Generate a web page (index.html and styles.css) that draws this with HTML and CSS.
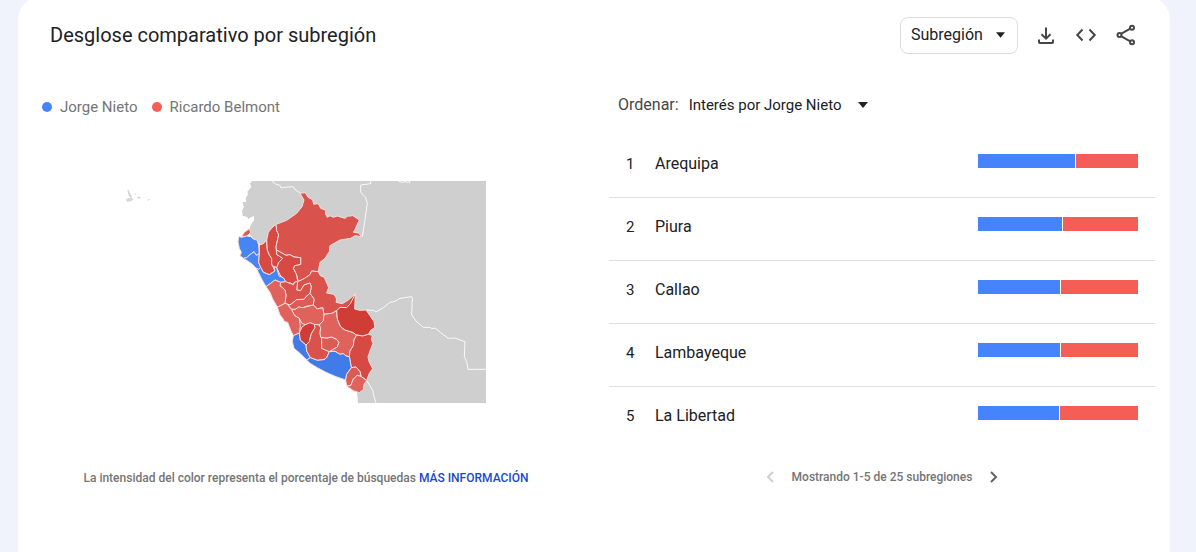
FILE: index.html
```html
<!DOCTYPE html>
<html lang="es">
<head>
<meta charset="utf-8">
<meta name="viewport" content="width=device-width, initial-scale=1">
<title>Desglose comparativo por subregión</title>
<link rel="stylesheet" href="styles.css">
</head>
<body>
<main class="card">
  <header class="card-header">
    <h1 class="title">Desglose comparativo por subregión</h1>
    <div class="actions">
      <div class="picker picker-boxed">
        <select class="select" aria-label="Resolución"><option>Subregión</option></select>
        <svg class="caret" viewBox="0 0 10 6" aria-hidden="true"><path d="M0 0h10L5 6z"/></svg>
      </div>
      <button class="icon-button" type="button" aria-label="Descargar CSV">
        <svg class="icon" viewBox="0 0 24 24"><path d="M12 4.500v11M7.500 11.200l4.500 4.500 4.500-4.500M5 16.500v2.700q0 .8.8.8h12.400q.8 0 .8-.8v-2.700"/></svg>
      </button>
      <button class="icon-button" type="button" aria-label="Insertar">
        <svg class="icon" viewBox="0 0 24 24"><path d="M8.500 6.500L3.300 12l5.200 5.500M15.500 6.500l5.200 5.500-5.200 5.500"/></svg>
      </button>
      <button class="icon-button" type="button" aria-label="Compartir">
        <svg class="icon" viewBox="0 0 24 24"><path d="M7 10.900l8.800-5M7 13.100l8.800 5"/><circle cx="5.500" cy="12" r="2"/><circle cx="18" cy="4.800" r="2"/><circle cx="18" cy="19.200" r="2"/></svg>
      </button>
    </div>
  </header>

  <div class="columns">
    <section class="map-panel">
      <ul class="legend">
        <li class="legend-item"><span class="dot blue"></span>Jorge Nieto</li>
        <li class="legend-item"><span class="dot red"></span>Ricardo Belmont</li>
      </ul>
      <svg class="map" viewBox="-330 18 1098 666" role="img" aria-label="Mapa de Perú por subregión">
        <g class="land">
          <path d="M68 18 60 25 64 36 52 50 54 58 47 70 49 80 37 82 42 95 36 107 38 122 52 126 54 132 72 122 72 136 62 150 58 162 60 180 100 215 300 500 380 640 384 684H768V18z"/>
          <path class="islands" d="M-308 45l5 1 4 11 5 8-3 4-7-7zM-312 74l7-5 10-1 6 5-8 6-12 1zM-288 56l7-1 1 3-5 1zM-280 67l8-2 5 3-6 4zM-248 75l7-4 1 3-6 3z"/>
        </g>
        <g class="border">
          <path d="M126 18 136 27 150 31 153 39 172 36 190 35 196 45 212 54"/>
          <path d="M422 16V26L392 30V52L406 66 412 85 404 140 397 185"/>
          <path d="M505 18q10 7 20 2l8 2 6-5v8"/>
          <path d="M408 405 432 406 438 411 460 398 480 382 492 380 510 370 545 365 547 370 545 420 558 438 580 457 600 457 606 461 615 459 632 473 655 490 675 489 705 500 703 545 710 560 714 583H768M410 618 420 632 428 646 431 662 438 684"/>
        </g>
        <path class="base" d="M100 240 150 200 210 200 230 280 260 330 300 400 350 440 380 520 370 600 300 560 240 530 180 430 130 340z"/>
        <g class="regions">
          <path class="r2" d="M35 184 43 172 58 161 62 172 50 184z"/>
          <path class="b1" d="M27 184 34 187 50 183 62 185 72 193 81 195 86 210 88 235 79 241 72 230 60 239 50 248 40 250 30 242 34 232 28 220 24 200z"/>
          <path class="b1" d="M50 248 60 239 72 230 79 241 88 236 86 262 92 277 86 283 79 280 65 266 50 256 40 250z"/>
          <path class="r4" d="M88 210 100 206 110 195 112 225 118 240 125 250 125 268 135 288 128 292 118 299 100 292 92 277 86 262 88 236z"/>
          <path class="r4" d="M110 195 115 172 126 158 138 148 140 166 146 180 138 215 140 238 158 250 146 263 140 278 132 275 125 268 125 250 118 240 112 225z"/>
          <path class="r3" d="M138 148 170 136 200 115 216 95 222 75 210 55 226 53 234 67 248 74 251 88 262 86 267 89 272 100 288 106 286 116 292 127 300 122 310 127 322 123 345 130 352 124 368 122 378 128 388 135 374 166 370 172 386 174 395 185 375 182 362 190 330 195 300 212 298 230 285 250 270 262 265 290 245 288 240 299 224 310 205 320 200 300 190 280 194 272 212 268 212 248 192 246 180 239 168 241 140 225 138 215 146 180 140 166z"/>
          <path class="r4" d="M140 238 140 225 168 241 180 239 192 246 212 248 212 268 194 272 190 280 200 300 203 320 194 321 190 329 182 324 165 323 165 316 152 303 140 278 146 263 158 250z"/>
          <path class="b1" d="M79 280 86 283 92 277 100 292 118 299 135 288 132 275 140 278 147 303 160 308 167 320 152 322 135 315 122 325 108 335 95 312z"/>
          <path class="r3" d="M203 320 224 310 240 299 245 288 265 290 271 302 283 307 292 328 296 338 290 354 312 358 320 372 318 382 337 386 355 375 376 356 372 396 352 400 320 407 306 415 282 418 278 398 262 402 250 390 252 372 240 355 244 336 240 324 222 330 212 347 200 345z"/>
          <path class="r3" d="M152 322 167 320 190 329 194 321 203 320 200 345 212 347 222 330 240 324 244 336 240 355 228 365 222 373 200 374 180 390 165 385 168 360 165 345 150 332z"/>
          <path class="r1" d="M108 335 122 325 135 315 152 322 150 332 165 345 168 360 165 385 150 393 142 396 128 372 120 352z"/>
          <path class="r2" d="M172 388 180 390 200 374 222 373 228 365 240 355 252 372 250 390 230 394 218 398 206 396 196 403 184 403z"/>
          <path class="r1" d="M184 403 196 403 206 396 218 398 250 390 262 402 278 398 282 418 280 437 268 450 255 450 240 445 226 449 215 444 208 430 194 422z"/>
          <path class="r1" d="M142 396 150 393 165 385 172 388 184 403 194 422 208 430 211 452 208 474 190 482 182 466 173 442 164 440 158 430 150 420z"/>
          <path class="b2" d="M190 482 208 474 211 495 228 510 230 528 241 548 230 555 210 535 192 520 187 500z"/>
          <path class="r5" d="M208 474 216 456 226 449 240 443 253 448 255 458 244 476 238 500 228 510 211 495z"/>
          <path class="r3" d="M253 448 268 450 272 458 270 475 275 487 275 520 298 530 290 548 282 554 262 556 241 548 230 528 228 510 238 500 244 476 255 458z"/>
          <path class="r2" d="M275 487 290 489 305 486 320 493 327 502 322 516 310 523 298 530 275 520z"/>
          <path class="r1" d="M282 418 306 415 320 407 322 432 332 455 345 465 368 472 380 480 372 495 370 512 360 528 358 545 348 543 340 536 330 538 315 529 298 530 310 523 322 516 327 502 320 493 305 486 290 489 272 487 270 475 272 458 268 450 280 437z"/>
          <path class="r5" d="M320 407 330 397 350 398 362 385 376 356 374 402 390 406 408 405 420 422 432 440 435 457 422 466 415 478 398 483 380 480 368 472 345 465 332 455 322 432z"/>
          <path class="r4" d="M380 480 398 483 415 478 427 481 424 494 429 505 420 528 414 545 417 560 428 581 418 595 410 616 393 604 390 590 378 576 364 578 358 545 360 528 370 512 372 495z"/>
          <path class="b2" d="M230 555 241 548 262 556 282 554 290 548 298 530 315 529 330 538 340 536 348 543 358 545 364 578 350 598 347 615 318 605 288 592 262 578 240 565z"/>
          <path class="r2" d="M364 578 378 576 390 590 393 604 382 601 370 612 362 632 350 633 347 615 350 598z"/>
          <path class="r1" d="M350 633 362 632 370 612 382 601 393 604 410 617 402 628 400 644 388 653 370 647z"/>
        </g>
      </svg>
      <p class="note">La intensidad del color representa el porcentaje de búsquedas <a class="more" href="#">MÁS INFORMACIÓN</a></p>
    </section>

    <section class="list-panel">
      <div class="sort">
        <label class="sort-label" for="sort">Ordenar:</label>
        <div class="picker">
          <select class="select" id="sort"><option>Interés por Jorge Nieto</option></select>
          <svg class="caret" viewBox="0 0 10 6" aria-hidden="true"><path d="M0 0h10L5 6z"/></svg>
        </div>
      </div>
      <ol class="rows">
        <li class="row"><span class="rank">1</span><span class="name">Arequipa</span><div class="bar"><span class="blue" style="width:60.6%"></span><span class="red rest"></span></div></li>
        <li class="row"><span class="rank">2</span><span class="name">Piura</span><div class="bar"><span class="blue" style="width:52.5%"></span><span class="red rest"></span></div></li>
        <li class="row"><span class="rank">3</span><span class="name">Callao</span><div class="bar"><span class="blue" style="width:51.2%"></span><span class="red rest"></span></div></li>
        <li class="row"><span class="rank">4</span><span class="name">Lambayeque</span><div class="bar"><span class="blue" style="width:51.2%"></span><span class="red rest"></span></div></li>
        <li class="row"><span class="rank">5</span><span class="name">La Libertad</span><div class="bar"><span class="blue" style="width:50.6%"></span><span class="red rest"></span></div></li>
      </ol>
      <nav class="pager" aria-label="Paginación">
        <button class="page-button" type="button" aria-label="Anterior" disabled><svg class="chevron" viewBox="0 0 8 12"><path d="M7 1L2 6l5 5"/></svg></button>
        <span>Mostrando 1-5 de 25 subregiones</span>
        <button class="page-button" type="button" aria-label="Siguiente"><svg class="chevron" viewBox="0 0 8 12"><path d="M1 1l5 5-5 5"/></svg></button>
      </nav>
    </section>
  </div>
</main>
</body>
</html>
```
FILE: styles.css
```css
* { box-sizing: border-box; }
body {
  margin: 0;
  min-height: 100vh;
  display: flex;
  background: #f0f3fc;
  color: #202124;
  font-family: Roboto, "Liberation Sans", sans-serif;
  font-size: 15px;
  line-height: 20px;
}
.card {
  flex: 1;
  margin: -4px 26px 0 18px;
  padding-top: 4px;
  background: #fff;
  border-radius: 24px 24px 0 0;
}
.card-header {
  display: flex;
  align-items: center;
  justify-content: space-between;
  height: 70px;
  padding: 0 32px;
}
.title { margin: 0; font-size: 20px; font-weight: 400; line-height: 28px; }
.actions { display: flex; align-items: center; gap: 16px; }
.picker { display: flex; align-items: center; position: relative; }
.picker-boxed { border: 1px solid #dadce0; border-radius: 8px; }
.select {
  appearance: none;
  border: 0;
  margin: 0;
  padding: 0 26px 0 0;
  background: transparent;
  color: #202124;
  font: inherit;
  line-height: 20px;
}
.picker-boxed .select { height: 35px; padding: 0 34px 0 10px; font-size: 16px; }
.caret { position: absolute; right: 0; width: 10px; height: 6px; fill: #202124; pointer-events: none; }
.picker-boxed .caret { right: 12px; width: 9px; }
.icon-button, .page-button { display: flex; padding: 0; border: 0; background: none; color: #444746; }
.icon { width: 24px; height: 24px; fill: none; stroke: currentColor; stroke-width: 2; }

.columns { display: grid; grid-template-columns: 1fr 1fr; }
.map-panel { display: flex; flex-direction: column; align-items: center; padding: 27px 0 0; }
.legend { display: flex; align-self: flex-start; gap: 14px; margin: 0; padding: 0 0 0 24px; list-style: none; color: #757575; }
.legend-item { display: flex; align-items: center; gap: 8px; }
.dot { width: 10px; height: 10px; border-radius: 50%; }
.blue { background: #4683ff; }
.red { background: #f45e57; }
.map { width: 366px; height: 222px; margin: 64px 6px 65px 0; }
.land { fill: #cfcfcf; }
.islands { fill: #d6d6d6; }
.border { fill: none; stroke: #fafafa; stroke-width: 3; }
.base { fill: #dc5b54; }
.regions { stroke: #f7dede; stroke-width: 3; stroke-linejoin: round; }
.r1 { fill: #df635c; }
.r2 { fill: #dc5b54; }
.r3 { fill: #d9534c; }
.r4 { fill: #d64a43; }
.r5 { fill: #d03d37; }
.b1 { fill: #4785f3; }
.b2 { fill: #417be8; }
.note { margin: 0; font-size: 12px; font-weight: 500; color: #757575; }
.more { color: #1a48d0; text-decoration: none; }

.list-panel { padding: 25px 15px 0; }
.sort { display: flex; align-items: center; gap: 10px; padding-left: 9px; }
.sort-label { color: #444746; font-size: 16px; }
.rows { margin: 20px 0 0; padding: 0; list-style: none; }
.row { display: flex; align-items: center; height: 63px; padding: 0 17px 4px; border-bottom: 1px solid #e0e0e0; }
.row:last-child { border-color: transparent; }
.rank { width: 29px; }
.name { flex: 1; font-size: 16px; }
.bar { display: flex; gap: 1px; width: 160px; height: 14px; margin-bottom: 7px; }
.rest { flex: 1; }
.pager { display: flex; align-items: center; justify-content: center; gap: 18px; margin-top: 17px; font-size: 12px; font-weight: 500; color: #757575; }
.chevron { width: 8px; height: 12px; fill: none; stroke: #616161; stroke-width: 2; }
.page-button:disabled .chevron { stroke: #cfcfcf; }
```
